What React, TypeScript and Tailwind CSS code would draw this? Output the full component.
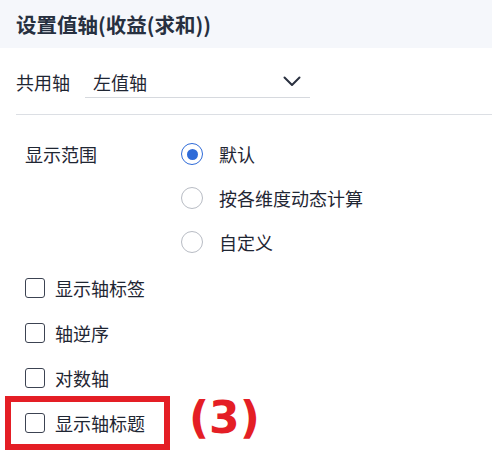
import React from "react";

const font = { fontFamily: '"Noto Sans CJK SC", "Noto Sans", sans-serif' };

const ranges = [
  { label: "默认", checked: true },
  { label: "按各维度动态计算", checked: false },
  { label: "自定义", checked: false },
];

const options = ["显示轴标签", "轴逆序", "对数轴"];

function Radio({ checked }: { checked: boolean }) {
  return (
    <span
      className={`flex h-[22px] w-[22px] items-center justify-center rounded-full border ${
        checked ? "border-[#2f6bd8]" : "border-[#b8bcc4]"
      }`}
    >
      {checked && <span className="h-[11px] w-[11px] rounded-full bg-[#2f6bd8]" />}
    </span>
  );
}

function Checkbox() {
  return <span className="h-5 w-5 rounded-[3px] border border-[#3c4352] bg-white" />;
}

export default function App() {
  return (
    <div className="h-[472px] w-[492px] overflow-hidden bg-white text-[#1f2633]" style={font}>
      {/* Header */}
      <div className="flex h-12 items-center bg-[#f5f7fb] px-4">
        <h2 className="text-[20.5px] font-bold leading-none text-[#273040]">设置值轴(收益(求和))</h2>
      </div>

      {/* Shared axis */}
      <div className="ml-4 border-b border-[#dcdfe4] pb-4 pt-[18px]">
        <div className="flex items-center">
          <span className="w-[69px] text-[18px] leading-none">共用轴</span>
          <div className="flex h-8 w-[225px] items-center justify-between border-b border-[#d6d9de] pl-2 pr-[9px]">
            <span className="text-[18px] leading-none">左值轴</span>
            <svg width="18" height="11" viewBox="0 0 18 11" fill="none">
              <path d="M1.5 1.5 L9 9 L16.5 1.5" stroke="#2a3140" strokeWidth="2" strokeLinecap="round" strokeLinejoin="round" />
            </svg>
          </div>
        </div>
      </div>

      {/* Display range */}
      <div className="pl-[25px] pt-[17px]">
        <div className="flex">
          <span className="flex h-11 w-[156px] items-center text-[18px] leading-none">显示范围</span>
          <div className="flex flex-col">
            {ranges.map((r) => (
              <label key={r.label} className="flex h-11 items-center gap-4">
                <Radio checked={r.checked} />
                <span className="text-[18px] leading-none">{r.label}</span>
              </label>
            ))}
          </div>
        </div>

        <div className="mt-[1px] flex flex-col">
          {options.map((o) => (
            <label key={o} className="flex h-[45px] items-center gap-[10px]">
              <Checkbox />
              <span className="text-[18px] leading-none">{o}</span>
            </label>
          ))}
          <label className="relative flex h-[45px] items-center gap-[10px]">
            <Checkbox />
            <span className="text-[18px] leading-none">显示轴标题</span>
            {/* annotation */}
            <span className="absolute left-[-20px] top-[-4px] h-[54px] w-[165px] border-[6px] border-[#e41e25]" />
            <span
              className="absolute left-[164px] top-[-4px] text-[44px] font-bold leading-none text-[#e41e25]"
              style={{ fontFamily: '"DejaVu Sans", sans-serif' }}
            >
              (3)
            </span>
          </label>
        </div>
      </div>
    </div>
  );
}
